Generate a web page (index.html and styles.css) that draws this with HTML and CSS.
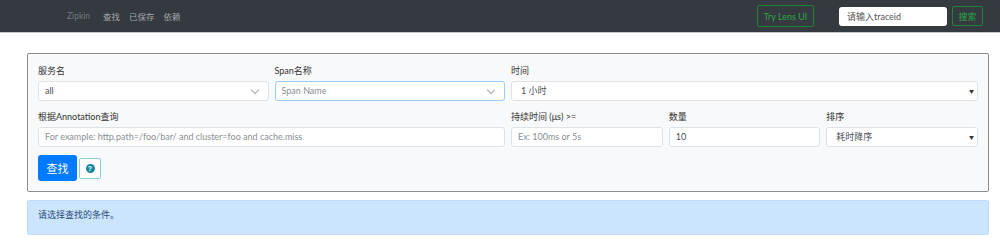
FILE: index.html
```html
<!DOCTYPE html>
<html lang="zh">
<head>
  <meta charset="UTF-8" />
  <title>Zipkin</title>
  <link rel="stylesheet" href="styles.css">
</head>
<body>
  <nav class="navbar">
    <span class="brand">Zipkin</span>
    <a class="nav-link">查找</a>
    <a class="nav-link">已保存</a>
    <a class="nav-link">依赖</a>
    <div class="nav-right">
      <button class="btn-green lens">Try Lens UI</button>
      <input class="trace-input" type="text" placeholder="请输入traceid" />
      <button class="btn-green search">搜索</button>
    </div>
  </nav>

  <div class="panel">
    <div class="grid">
      <div class="field span3">
        <label>服务名</label>
        <div class="box">all<span class="chev"></span></div>
      </div>
      <div class="field span3">
        <label>Span名称</label>
        <div class="box focus"><span class="ph">Span Name</span><span class="chev"></span></div>
      </div>
      <div class="field span6">
        <label>时间</label>
        <div class="box native">1 小时<span class="tri">▼</span></div>
      </div>

      <div class="field span6">
        <label>根据Annotation查询</label>
        <div class="box"><span class="ph">For example: http.path=/foo/bar/ and cluster=foo and cache.miss</span></div>
      </div>
      <div class="field span2">
        <label>持续时间 (μs) &gt;=</label>
        <div class="box"><span class="ph">Ex: 100ms or 5s</span></div>
      </div>
      <div class="field span2">
        <label>数量</label>
        <div class="box">10</div>
      </div>
      <div class="field span2">
        <label>排序</label>
        <div class="box native">耗时降序<span class="tri">▼</span></div>
      </div>
    </div>

    <div class="actions">
      <button class="btn-primary">查找</button>
      <button class="btn-help"><span class="help-dot">?</span></button>
    </div>
  </div>

  <div class="alert">请选择查找的条件。</div>
</body>
</html>
```

FILE: styles.css
```css
body {
  margin: 0;
  background: #fff;
  font-family: Lato, "Noto Sans CJK SC", sans-serif;
  font-size: 9px;
  color: #333;
}

.navbar {
  height: 32px;
  background: #343a40;
  border-bottom: 1px solid #c8c8c8;
  display: flex;
  align-items: center;
  padding-left: 67px;
  padding-right: 17px;
}

.brand {
  color: #73787c;
  font-size: 8.5px;
  margin-right: 13px;
}

.nav-link {
  color: #a3a6a9;
  font-size: 8.5px;
  margin-right: 9px;
}

.nav-right {
  margin-left: auto;
  display: flex;
  align-items: center;
}

.btn-green {
  background: transparent;
  border: 1px solid #1f8236;
  color: #28a745;
  border-radius: 2px;
  font-family: inherit;
  font-size: 9px;
  padding: 0;
}

.lens {
  width: 57px;
  height: 22px;
  margin-right: 25px;
}

.trace-input {
  width: 108px;
  height: 19px;
  box-sizing: border-box;
  border: none;
  border-radius: 3px;
  padding: 0 8px;
  font-family: inherit;
  font-size: 9px;
  outline: none;
}

.trace-input::placeholder {
  color: #555;
}

.search {
  width: 31px;
  height: 20px;
  margin-left: 5px;
}

.panel {
  margin: 20px 11px 0 27px;
  width: 940px;
  border: 1px solid #8c8c8c;
  border-radius: 2px;
  background: #f8f9fa;
  padding: 10px;
}

.grid {
  display: grid;
  grid-template-columns: repeat(12, 1fr);
  column-gap: 6px;
  row-gap: 9px;
}

.span2 { grid-column: span 2; }
.span3 { grid-column: span 3; }
.span6 { grid-column: span 6; }

.field label {
  display: block;
  height: 14px;
  line-height: 14px;
  margin-bottom: 3px;
  color: #333;
}

.box {
  position: relative;
  height: 20px;
  box-sizing: border-box;
  border: 1px solid #dfe2e5;
  border-radius: 3px;
  background: #fff;
  padding: 0 6px;
  line-height: 18px;
  color: #495057;
}

.box.focus {
  border-color: #9ccbf5;
}

.ph {
  color: #8a8f94;
}

.chev {
  position: absolute;
  right: 10px;
  top: 5px;
  width: 5px;
  height: 5px;
  border-right: 1px solid #a8a8a8;
  border-bottom: 1px solid #a8a8a8;
  transform: rotate(45deg);
}

.box.native {
  padding-left: 9px;
}

.tri {
  position: absolute;
  right: 3px;
  top: 0;
  font-size: 5px;
  color: #333;
}

.actions {
  display: flex;
  align-items: center;
  margin-top: 8px;
}

.btn-primary {
  width: 39px;
  height: 26px;
  background: #007bff;
  border: none;
  border-radius: 3px;
  color: #fff;
  font-family: inherit;
  font-size: 11px;
  padding: 0;
}

.btn-help {
  width: 22px;
  height: 21px;
  margin-left: 2px;
  background: #fff;
  border: 1px solid #8ad0da;
  border-radius: 2px;
  padding: 0;
  display: flex;
  align-items: center;
  justify-content: center;
}

.help-dot {
  width: 9px;
  height: 9px;
  border-radius: 50%;
  background: #17869a;
  color: #fff;
  font-size: 7px;
  font-weight: bold;
  line-height: 9px;
  text-align: center;
}

.alert {
  margin: 8px 11px 0 27px;
  height: 35px;
  box-sizing: border-box;
  background: #cce5ff;
  border: 1px solid #bcdcfd;
  border-radius: 2px;
  color: #2a4a75;
  padding-left: 10px;
  line-height: 27px;
}
```
